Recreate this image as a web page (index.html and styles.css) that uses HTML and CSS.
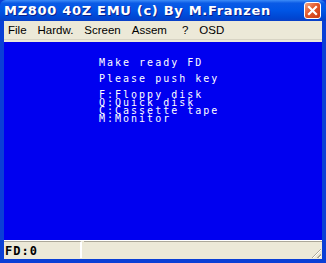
FILE: index.html
```html
<!DOCTYPE html>
<html lang="en">
<head>
  <meta charset="UTF-8">
  <title>MZ800 40Z EMU</title>
  <link rel="stylesheet" href="styles.css">
</head>
<body>
  <div class="window">
    <div class="title-bar">
      <span class="title">MZ800 40Z EMU (c) By M.Franzen</span>
      <span class="close-btn">
        <svg width="13" height="13" viewBox="0 0 13 13">
          <path d="M3 3 L10 10 M10 3 L3 10" stroke="#fff" stroke-width="2.2" stroke-linecap="square"/>
        </svg>
      </span>
    </div>
    <div class="frame">
      <ul class="menu">
        <li>File</li>
        <li>Hardw.</li>
        <li>Screen</li>
        <li>Assem</li>
        <li class="help">?</li>
        <li>OSD</li>
      </ul>
      <div class="screen">
        <div class="screen-text">
          <p class="big">Make ready FD</p>
          <p class="big">Please push key</p>
          <p>F:Floppy disk</p>
          <p>Q:Quick disk</p>
          <p>C:Cassette tape</p>
          <p>M:Monitor</p>
        </div>
      </div>
      <div class="status-bar">
        <div class="status-cell first">FD:0</div>
        <div class="status-cell rest"></div>
        <span class="grip"></span>
      </div>
    </div>
  </div>
</body>
</html>
```

FILE: styles.css
```css
body {
  margin: 0;
  background: #fff;
}

.window {
  width: 326px;
  height: 263px;
  display: flex;
  flex-direction: column;
  background: #0a3fd6;
}

.title-bar {
  height: 21px;
  display: flex;
  align-items: center;
  justify-content: space-between;
  padding: 0 5px 0 4px;
  background: linear-gradient(to bottom, #3d8cf7 0%, #0a5ae6 15%, #0055e5 50%, #0046d2 85%, #0a3fc6 100%);
  border-radius: 6px 6px 0 0;
}

.title {
  font-family: "DejaVu Sans", sans-serif;
  font-weight: bold;
  font-size: 13px;
  color: #fff;
  letter-spacing: 0.7px;
  text-shadow: 1px 1px 0 #0a1e8c;
}

.close-btn {
  width: 17px;
  height: 17px;
  box-sizing: border-box;
  border: 1px solid #fff;
  border-radius: 3px;
  background: linear-gradient(to bottom right, #f3a585, #e2582a 45%, #c9380f);
  display: flex;
  align-items: center;
  justify-content: center;
}

.frame {
  flex: 1;
  margin: 0 4px 4px 4px;
  display: flex;
  flex-direction: column;
  background: #ece9d8;
}

.menu {
  list-style: none;
  margin: 0;
  padding: 0 0 0 4px;
  height: 18px;
  display: flex;
  gap: 11px;
  align-items: center;
  font-family: "Liberation Sans", Arial, sans-serif;
  font-size: 11.5px;
  color: #000;
  border-bottom: 1px solid #d8d4c4;
}

.menu li.help {
  margin-left: 4px;
}

.screen {
  flex: 1;
  margin-top: 2px;
  background: #0000f0;
}

.screen-text {
  padding: 17px 0 0 95px;
  font-family: "DejaVu Sans Mono", monospace;
  font-size: 10px;
  letter-spacing: 2px;
  color: #fff;
}

.screen-text p {
  margin: 0;
  line-height: 8px;
  height: 8px;
  white-space: pre;
}

.screen-text p.big {
  margin-bottom: 8px;
}

.status-bar {
  height: 18px;
  display: flex;
  position: relative;
  border-top: 1px solid #fff;
  background: #ece9d8;
}

.status-cell {
  border-top: 1px solid #aca899;
  height: 17px;
  box-sizing: border-box;
}

.status-cell.first {
  width: 78px;
  border-right: 2px solid #fff;
  padding: 3px 0 0 1px;
  font-family: "DejaVu Sans Mono", monospace;
  font-weight: bold;
  font-size: 12px;
  line-height: 12px;
  letter-spacing: 1px;
  color: #000;
}

.status-cell.rest {
  flex: 1;
  margin-left: 2px;
}

.grip {
  position: absolute;
  right: 1px;
  bottom: 1px;
  width: 12px;
  height: 12px;
  background: repeating-linear-gradient(135deg, transparent 0 2px, #aca899 2px 3px, #fff 3px 4px);
  clip-path: polygon(100% 0, 100% 100%, 0 100%);
}
```
